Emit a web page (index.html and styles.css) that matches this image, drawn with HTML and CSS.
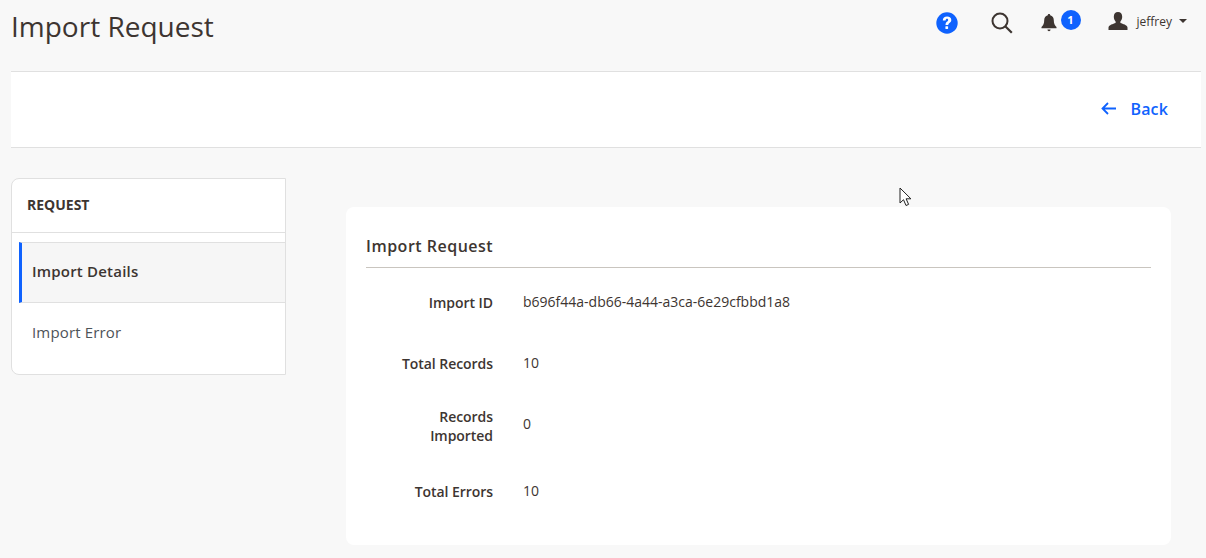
FILE: index.html
```html
<!DOCTYPE html>
<html lang="en">
<head>
<meta charset="utf-8">
<title>Import Request</title>
<link rel="stylesheet" href="styles.css">
</head>
<body>
<div class="page">
  <header class="topbar">
    <h1 class="title">Import Request</h1>
    <div class="tools">
      <svg class="ic-help" width="22" height="22" viewBox="0 0 22 22"><circle cx="11" cy="11" r="10.7" fill="#0f62fe"/><path d="M6.800 8.400c0-2.300 1.700-3.900 4.300-3.900s4.200 1.400 4.200 3.500c0 2.900-3 2.800-3 5H9.500c0-3.400 2.700-3.300 2.700-5 0-.8-.5-1.200-1.200-1.200-.8 0-1.300.6-1.400 1.600z" fill="#fff"/><rect x="9.400" y="14.300" width="2.700" height="2.700" rx=".4" fill="#fff"/></svg>
      <svg class="ic-search" width="22" height="22" viewBox="0 0 22 22"><circle cx="9" cy="9" r="7.500" fill="none" stroke="#3d3531" stroke-width="2"/><path d="M14.500 14.500l6.300 6.200" stroke="#3d3531" stroke-width="2.200" fill="none"/></svg>
      <div class="bell">
        <svg width="16" height="18" viewBox="0 0 16 18"><path d="M8 0c.8 0 1.200.5 1.200 1.200 2.400.6 3.600 2.600 3.600 5 0 3.500 1 5 2.700 6.800v1.200H.5V13C2.200 11.200 3.200 9.700 3.200 6.200c0-2.400 1.200-4.400 3.600-5C6.800.5 7.200 0 8 0z" fill="#3d3531"/><path d="M6.500 15.500h3c0 1-.6 1.700-1.500 1.700s-1.500-.7-1.500-1.700z" fill="#3d3531"/></svg>
        <span class="badge">1</span>
      </div>
      <div class="user">
        <svg width="20" height="18" viewBox="0 0 20 18"><path d="M10 0c2.700 0 4.200 2 4.200 4.700 0 2-.8 3.700-1.800 4.700v1.600c2.500 1 6.700 1.800 7.100 4.400V18H.5v-2.600c.4-2.600 4.600-3.400 7.100-4.400V9.400c-1-1-1.800-2.700-1.800-4.700C5.800 2 7.300 0 10 0z" fill="#3d3531"/></svg>
        <span class="user-name">jeffrey</span>
        <span class="caret"></span>
      </div>
    </div>
  </header>

  <div class="actionbar">
    <a class="back" href="#">
      <svg width="15" height="13" viewBox="0 0 15 13"><path d="M7 1L1.500 6.500 7 12M1.500 6.500H15" fill="none" stroke="#0f62fe" stroke-width="1.800"/></svg>
      <span>Back</span>
    </a>
  </div>

  <main class="content">
    <aside class="side">
      <div class="side-head">REQUEST</div>
      <nav class="side-nav">
        <a class="side-item active" href="#">Import Details</a>
        <a class="side-item" href="#">Import Error</a>
      </nav>
    </aside>

    <section class="card">
      <h2 class="card-title">Import Request</h2>
      <dl class="fields">
        <div class="field f-id"><dt>Import ID</dt><dd>b696f44a-db66-4a44-a3ca-6e29cfbbd1a8</dd></div>
        <div class="field f-total"><dt>Total Records</dt><dd>10</dd></div>
        <div class="field f-imp"><dt>Records<br>Imported</dt><dd>0</dd></div>
        <div class="field f-err"><dt>Total Errors</dt><dd>10</dd></div>
      </dl>
    </section>
  </main>
</div>
<svg class="cursor" width="14" height="20" viewBox="0 0 14 20"><path d="M1 1v15l3.500-3.300 2.500 5.800 2.600-1.100-2.500-5.600h4.800z" fill="#fff" stroke="#222" stroke-width="1"/></svg>
</body>
</html>
```
FILE: styles.css
```css
* { box-sizing: border-box; }
html, body { margin: 0; height: 100%; }
body {
  background: #f8f8f8;
  font-family: "Open Sans", sans-serif;
  color: #3d3531;
  overflow: hidden;
  position: relative;
}
.page { padding: 0 5px 0 11px; }

.topbar {
  height: 72px;
  border-bottom: 1px solid #e0e0e0;
  display: flex;
  justify-content: space-between;
  align-items: flex-start;
}
.title {
  margin: 7px 0 0;
  font-size: 28px;
  line-height: 38px;
  font-weight: 400;
  color: #3d3531;
}
.tools {
  display: flex;
  align-items: flex-start;
  padding: 12px 14px 0 0;
}
.ic-help { margin-right: 33px; }
.ic-search { margin-right: 28px; }
.bell { display: flex; margin-right: 27px; padding-top: 2px; }
.badge {
  width: 20px;
  height: 20px;
  margin: -4px 0 0 4px;
  border-radius: 50%;
  background: #0f62fe;
  color: #fff;
  font-size: 11px;
  font-weight: 700;
  line-height: 20px;
  text-align: center;
}
.user { display: flex; align-items: center; height: 18px; }
.user-name { font-size: 12px; margin-left: 9px; }
.caret {
  margin-left: 7px;
  border-left: 4px solid transparent;
  border-right: 4px solid transparent;
  border-top: 4px solid #3d3531;
}

.actionbar {
  height: 76px;
  background: #fff;
  border-bottom: 1px solid #e0e0e0;
  display: flex;
  justify-content: flex-end;
  align-items: center;
  padding: 0 33px 2px 0;
}
.back {
  display: flex;
  align-items: center;
  gap: 14px;
  color: #0f62fe;
  font-size: 16px;
  font-weight: 600;
  letter-spacing: .15px;
  text-decoration: none;
}

.content {
  display: flex;
  align-items: flex-start;
  padding-top: 30px;
}
.side {
  width: 275px;
  height: 197px;
  margin-right: 60px;
  background: #fff;
  border: 1px solid #e0e0e0;
  border-radius: 8px 0 0 8px;
}
.side-head {
  height: 54px;
  padding-left: 15px;
  border-bottom: 1px solid #e0e0e0;
  font-size: 14px;
  font-weight: 700;
  line-height: 52px;
  color: #3d3531;
}
.side-nav { display: flex; flex-direction: column; margin-top: 9px; }
.side-item {
  display: block;
  height: 61px;
  padding-left: 20px;
  font-size: 15px;
  letter-spacing: .15px;
  line-height: 59px;
  color: #4d5358;
  text-decoration: none;
}
.side-item.active {
  margin-left: 7px;
  padding-left: 10px;
  background: #f6f6f6;
  border-top: 1px solid #e0e0e0;
  border-bottom: 1px solid #e0e0e0;
  border-left: 3px solid #0f62fe;
  color: #3d3531;
  font-weight: 600;
  letter-spacing: .2px;
  line-height: 57px;
}

.card {
  width: 825px;
  height: 338px;
  margin-top: 29px;
  background: #fff;
  border-radius: 8px;
  padding: 20px;
}
.card-title {
  margin: 0;
  height: 41px;
  border-bottom: 1px solid #c9c5bf;
  font-size: 16px;
  font-weight: 600;
  letter-spacing: .5px;
  line-height: 38px;
  color: #3d3531;
}
.fields { margin: 0; }
.field {
  display: grid;
  grid-template-columns: 127px 1fr;
  column-gap: 30px;
  font-size: 14px;
  line-height: 19px;
}
.field dt { text-align: right; font-weight: 600; letter-spacing: -.05px; }
.field dd { margin: 0; font-size: 14px; line-height: 17px; }
.f-id { margin-top: 25px; }
.f-total { margin-top: 42px; }
.f-imp { margin-top: 34px; }
.f-imp dd { align-self: center; padding-bottom: 5px; }
.f-err { margin-top: 37px; }

.cursor { position: absolute; left: 899px; top: 187px; }
```
